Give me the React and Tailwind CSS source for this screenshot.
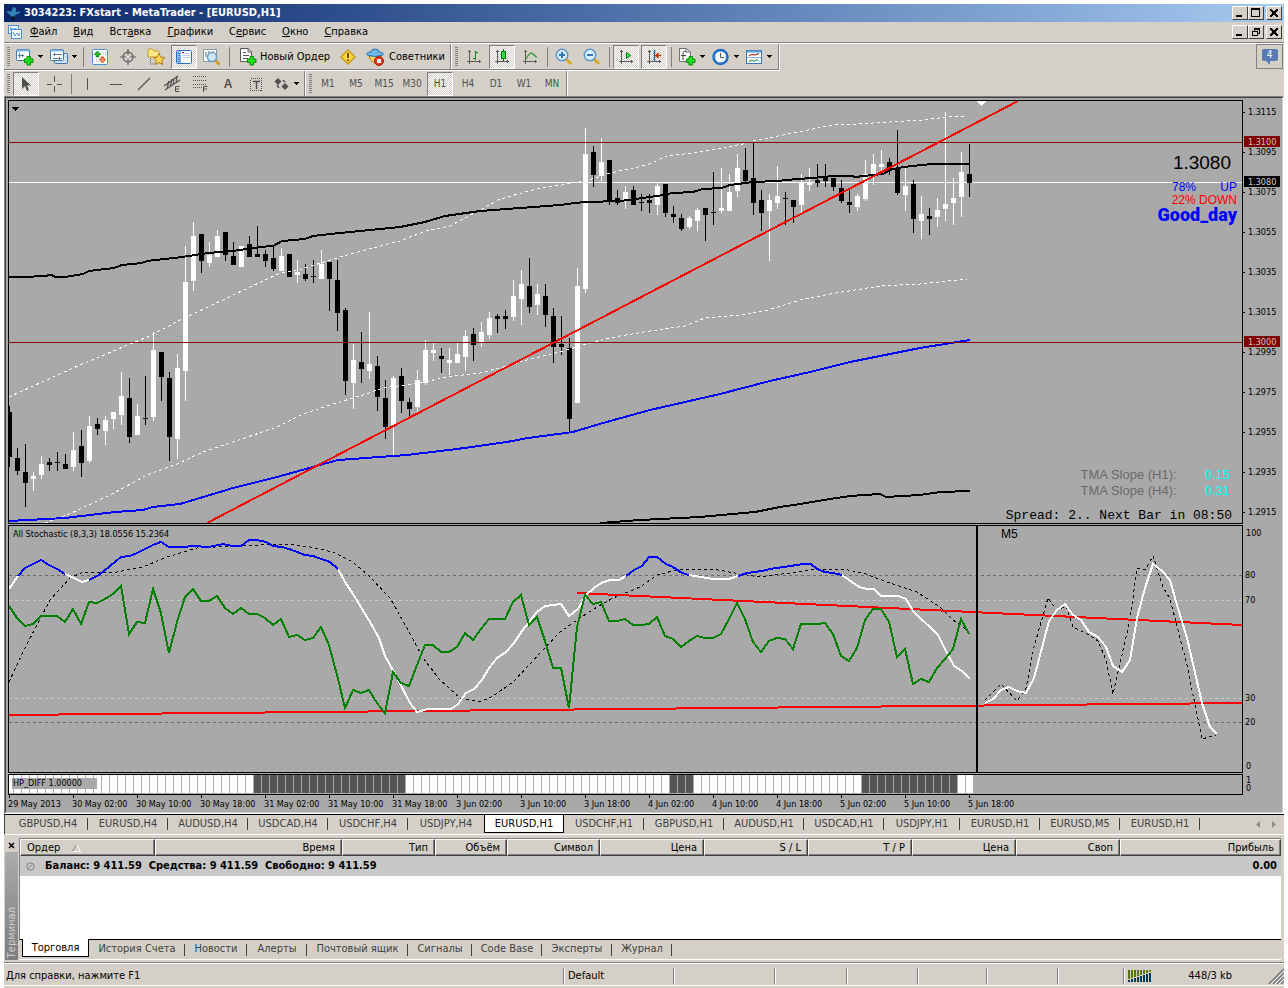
import React, { useState } from "react";

// [high, body top, body bottom, low, filled]
const candles = [
  [406, 412, 457, 467, 1], [448, 458, 471, 475, 1], [444, 472, 483, 507, 1], [472, 476, 479, 491, 0],
  [456, 464, 475, 479, 0], [458, 462, 465, 471, 1], [452, 462, 463, 471, 1], [454, 464, 469, 469, 1],
  [432, 450, 467, 471, 0], [430, 446, 463, 477, 1], [416, 426, 461, 463, 0], [418, 424, 429, 435, 1],
  [416, 420, 431, 445, 0], [412, 412, 419, 429, 0], [372, 396, 415, 425, 0], [378, 398, 437, 443, 1],
  [404, 416, 435, 435, 0], [376, 418, 419, 425, 1], [332, 350, 417, 421, 0], [352, 352, 377, 401, 1],
  [372, 378, 437, 461, 1], [354, 368, 439, 459, 0], [246, 282, 371, 401, 0], [222, 236, 281, 291, 0],
  [234, 234, 261, 273, 1], [242, 255, 263, 267, 0], [230, 236, 257, 257, 0], [232, 232, 255, 261, 1],
  [242, 256, 265, 265, 1], [246, 246, 267, 267, 0], [236, 244, 257, 257, 1], [226, 254, 257, 257, 1],
  [250, 254, 261, 267, 1], [246, 258, 269, 271, 1], [248, 256, 271, 271, 0], [254, 254, 277, 277, 1],
  [260, 272, 275, 283, 0], [264, 274, 279, 281, 1], [260, 276, 277, 283, 1], [250, 264, 279, 279, 0],
  [262, 262, 279, 311, 1], [260, 280, 313, 331, 1], [308, 310, 381, 395, 1], [344, 360, 383, 409, 0],
  [332, 362, 369, 383, 1], [312, 364, 371, 379, 0], [356, 366, 397, 411, 1], [380, 398, 427, 439, 1],
  [376, 378, 425, 455, 0], [368, 376, 401, 413, 1], [398, 402, 409, 417, 1], [370, 380, 407, 413, 0],
  [340, 350, 383, 385, 0], [343, 350, 353, 361, 0], [348, 356, 359, 373, 1], [348, 360, 363, 375, 0],
  [343, 354, 363, 363, 0], [330, 336, 357, 371, 0], [328, 334, 345, 361, 1], [322, 332, 342, 347, 0],
  [312, 318, 335, 339, 0], [314, 316, 319, 333, 1], [310, 316, 319, 329, 1], [280, 296, 317, 321, 0],
  [270, 284, 299, 325, 0], [258, 286, 307, 313, 1], [284, 294, 305, 315, 0], [284, 296, 315, 327, 1],
  [308, 316, 347, 363, 1], [316, 344, 347, 355, 1], [338, 348, 419, 432, 1], [268, 286, 403, 403, 0],
  [128, 154, 289, 293, 0], [146, 152, 175, 187, 1], [138, 162, 176, 181, 0], [160, 160, 202, 205, 1],
  [190, 198, 203, 205, 1], [186, 192, 200, 209, 0], [186, 190, 205, 205, 1], [194, 202, 203, 211, 1],
  [194, 200, 203, 213, 1], [183, 186, 205, 215, 0], [184, 184, 213, 217, 1], [206, 214, 217, 223, 1],
  [214, 218, 229, 231, 1], [216, 218, 227, 229, 0], [208, 210, 221, 231, 0], [208, 208, 215, 241, 1],
  [172, 212, 213, 225, 1], [168, 208, 211, 213, 0], [174, 192, 211, 211, 0], [154, 168, 191, 197, 0],
  [148, 170, 181, 183, 1], [143, 178, 203, 215, 1], [190, 200, 213, 231, 1], [194, 200, 211, 261, 0],
  [166, 196, 203, 209, 0], [192, 198, 199, 225, 1], [200, 200, 207, 223, 1], [174, 182, 205, 213, 0],
  [168, 182, 185, 191, 0], [164, 180, 183, 187, 1], [164, 178, 181, 187, 1], [178, 178, 187, 191, 1],
  [180, 188, 201, 203, 1], [190, 202, 205, 213, 1], [194, 196, 207, 211, 0], [160, 174, 199, 201, 0],
  [154, 164, 175, 185, 0], [150, 164, 167, 171, 0], [158, 162, 170, 175, 1], [130, 168, 193, 195, 1],
  [168, 186, 195, 211, 0], [180, 184, 219, 233, 1], [196, 214, 221, 239, 0], [208, 216, 219, 235, 1],
  [198, 210, 217, 227, 0], [112, 204, 209, 221, 0], [178, 198, 203, 225, 0], [152, 172, 197, 217, 0],
  [144, 174, 183, 197, 1],
];

const maMiddle =
  "9,277 33,277 35,276 43,276 52,275 55,277 65,277 83,274 89,271 114,268 122,265 142,263 147,261 182,257 208,253 233,251 260,247 273,246 282,241 305,239 313,236 330,234 370,230 400,227 425,222 445,216 480,211 520,208 560,205 575,203 586,202 620,201 635,199 657,196 673,193 693,192 703,189 722,188 730,185 753,182 777,181 797,179 813,178 833,176 852,176 855,177 873,175 883,174 890,170 903,167 932,164 970,164";
const maLow =
  "600,523 640,520 700,517 755,512 780,507 800,504 830,499 850,496 880,494 886,497 920,495 940,492 970,491";
const maBlue =
  "9,521 65,518 115,512 143,510 153,507 180,504 200,498 233,488 277,477 320,465 338,460 407,455 457,449 507,442 528,438 573,432 603,423 650,410 720,394 770,381 810,372 850,362 890,354 920,348 945,344 970,340";
const bandUpper =
  "9,397 33,386 80,365 130,344 150,336 180,320 208,307 250,287 280,273 302,269 330,260 350,254 400,241 426,231 450,226 480,210 500,199 540,188 562,185 572,183 586,181 610,173 647,165 667,156 693,153 743,144 753,141 793,133 833,125 857,124 923,120 947,117 967,116";
const bandLower =
  "45,523 67,515 110,495 147,475 177,464 203,452 233,442 277,427 303,414 330,405 363,395 383,388 420,383 447,377 480,373 507,366 527,360 563,351 583,345 593,342 620,336 650,331 685,326 705,318 740,315 765,311 800,300 830,294 880,286 920,284 967,279";

const stochWhite = [
  "9,589 18,576",
  "65,574 74,578 82,582 89,580",
  "338,569 345,582 353,594 370,622 379,638 385,656 394,672 410,703 417,712 428,709 451,709 458,704 466,693 474,689 482,680 489,668 497,658 506,652 514,643 522,631 529,622 537,612 545,606 553,605 561,604 569,616 578,609 586,595 594,588 601,583 610,580 619,580 626,576",
  "689,575 701,577 713,579 729,579 738,576",
  "842,575 859,587 867,589 874,589 881,596 898,596 906,599 913,611 938,635 947,653 954,666 962,671 970,679",
];
const stochBlue = [
  "18,576 25,568 41,560 49,565 57,569 65,574",
  "89,580 99,575 121,557 130,556 137,553 153,545 161,542 169,547 183,547 193,546 209,547 223,544 232,546 241,546 249,540 257,540 266,542 273,546 282,547 289,549 305,555 313,556 330,562 338,569",
  "626,576 634,570 642,566 649,557 657,557 666,564 673,567 682,573 689,575",
  "738,576 747,573 762,571 770,569 797,565 803,564 811,564 817,569 825,572 833,573 842,575",
];
const stochSignal =
  "9,682 25,648 50,600 70,578 83,572 117,572 143,567 167,557 197,548 233,546 287,544 310,547 333,552 353,562 370,577 390,598 407,628 423,658 440,680 460,698 480,702 493,696 513,682 543,650 560,632 580,618 597,607 613,598 640,587 657,575 680,569 713,569 740,574 760,577 797,572 817,569 843,569 863,573 887,582 917,592 940,607 953,620 969,632";
const stochFast = [
  606, 618, 626, 624, 616, 616, 616, 622, 609, 624, 602, 603, 599, 594, 586, 634, 622, 623, 589, 613, 653,
  622, 597, 589, 601, 601, 596, 608, 614, 608, 614, 614, 618, 625, 619, 637, 635, 640, 638, 627, 645, 675,
  708, 690, 693, 690, 703, 713, 672, 683, 686, 665, 645, 645, 652, 652, 647, 633, 640, 629, 619, 619, 619,
  602, 595, 625, 617, 641, 668, 668, 708, 627, 595, 604, 602, 621, 621, 619, 625, 625, 624, 617, 636, 639,
  647, 641, 636, 638, 638, 634, 619, 603, 619, 642, 652, 641, 638, 639, 649, 624, 624, 624, 623, 634, 656,
  661, 648, 620, 609, 609, 622, 657, 649, 684, 679, 682, 668, 659, 649, 619, 634,
];
const m5Main =
  "985,703 993,699 1001,690 1009,687 1017,691 1026,693 1034,678 1049,621 1057,610 1065,604 1073,615 1081,620 1089,632 1098,637 1106,647 1113,666 1122,672 1130,660 1137,618 1145,588 1153,564 1162,571 1170,580 1177,605 1187,638 1202,703 1210,727 1217,734";
const m5Signal =
  "985,700 1001,684 1017,701 1026,688 1034,647 1048,598 1057,610 1066,606 1073,627 1089,635 1098,641 1106,660 1113,694 1130,620 1137,568 1145,570 1153,556 1163,587 1170,599 1187,665 1202,739 1216,735";

const prices = ["1.3115", "1.3095", "1.3075", "1.3055", "1.3035", "1.3015", "1.2995", "1.2975", "1.2955", "1.2935", "1.2915"];
const times = [
  "29 May 2013", "30 May 02:00", "30 May 10:00", "30 May 18:00", "31 May 02:00", "31 May 10:00", "31 May 18:00", "3 Jun 02:00",
  "3 Jun 10:00", "3 Jun 18:00", "4 Jun 02:00", "4 Jun 10:00", "4 Jun 18:00", "5 Jun 02:00", "5 Jun 10:00", "5 Jun 18:00",
];

const menu = [
  ["", "Ф", "айл"], ["", "В", "ид"], ["Вст", "а", "вка"], ["", "Г", "рафики"],
  ["С", "е", "рвис"], ["", "О", "кно"], ["", "С", "правка"],
];

const chartTabs = [
  "GBPUSD,H4", "EURUSD,H4", "AUDUSD,H4", "USDCAD,H4", "USDCHF,H4", "USDJPY,H4", "EURUSD,H1", "USDCHF,H1",
  "GBPUSD,H1", "AUDUSD,H1", "USDCAD,H1", "USDJPY,H1", "EURUSD,H1", "EURUSD,M5", "EURUSD,H1",
];

const terminalTabs = [
  ["Торговля", "w-[67px]"], ["История Счета", "w-24"], ["Новости", "w-[62px]"], ["Алерты", "w-[60px]"],
  ["Почтовый ящик", "w-[101px]"], ["Сигналы", "w-16"], ["Code Base", "w-[70px]"], ["Эксперты", "w-[70px]"], ["Журнал", "w-[60px]"],
];

const columns = [
  ["Время", "w-[187px]"], ["Тип", "w-[93px]"], ["Объём", "w-[72px]"], ["Символ", "w-[93px]"], ["Цена", "w-[104px]"],
  ["S / L", "w-[104px]"], ["T / P", "w-[104px]"], ["Цена", "w-[104px]"], ["Своп", "w-[104px]"], ["Прибыль", ""],
];

/* ---------- toolbar parts ---------- */

function Grip() {
  return (
    <div className="w-2 shrink-0 flex items-center justify-center">
      <div className="w-[3px] h-5 bg-[repeating-linear-gradient(#808080_0_1px,#d4d0c8_1px_2px)]" />
    </div>
  );
}

function Sep() {
  return (
    <div className="w-1.5 shrink-0 flex items-center justify-center">
      <div className="w-px h-5 bg-[#808080]" />
    </div>
  );
}

function ToolButton({ label, pressed, drop, children }) {
  return (
    <button
      type="button"
      aria-label={label}
      className={
        "shrink-0 h-6 flex items-center " +
        (drop ? "w-[34px] pl-1 gap-1 " : "w-[26px] mx-px justify-center ") +
        (pressed
          ? "border border-t-[#808080] border-l-[#808080] border-r-white border-b-white bg-[repeating-conic-gradient(#fff_0_25%,#d4d0c8_0_50%)] bg-[length:2px_2px]"
          : "")
      }
    >
      {children}
      {drop && (
        <svg width="5" height="3" className="shrink-0" shapeRendering="crispEdges">
          <path d="M0 0H5V1H4V2H3V3H2V2H1V1H0Z" />
        </svg>
      )}
    </button>
  );
}

function Icon({ w = 18, h = 18, children }) {
  return (
    <svg width={w} height={h} viewBox={`0 0 ${w} ${h}`} fill="none" className="shrink-0" aria-hidden="true">
      {children}
    </svg>
  );
}

const Plus = ({ x, y }) => (
  <path
    transform={`translate(${x} ${y})`}
    d="M3 .5H6.500V3H9V6.500H6.500V9H3V6.500H.5V3H3Z"
    fill="#1fe01f"
    stroke="#0a8a0a"
  />
);

const Axes = () => (
  <g stroke="#5a5a5a" shapeRendering="crispEdges">
    <path d="M3.500 2V16M1 13.500H15" />
    <path d="M2 3.500H5M13.500 12V15" />
  </g>
);

function NewChartIcon() {
  return (
    <Icon>
      <rect x=".5" y="1.500" width="13" height="11" rx="1" fill="#fff" stroke="#3a78b4" />
      <path d="M1 2.500H13" stroke="#7db1e0" strokeWidth="2" />
      <path d="M3.500 5V10M2 7.500H8M6.500 6V9" stroke="#5a7a9a" />
      <Plus x={8} y={8} />
    </Icon>
  );
}

function ProfilesIcon() {
  return (
    <Icon>
      <rect x="4.500" y="5.500" width="13" height="10" rx="1" fill="#cfe3f7" stroke="#3a78b4" />
      <rect x=".5" y="1.500" width="13" height="11" rx="1" fill="#fff" stroke="#3a78b4" />
      <path d="M1 2.500H13" stroke="#7db1e0" strokeWidth="2" />
      <path d="M3 6.500H12M3 10.500H12M4.500 5V8M9.500 9V12" stroke="#5a7a9a" />
    </Icon>
  );
}

function MarketIcon() {
  return (
    <Icon w={16} h={16}>
      <rect x=".5" y=".5" width="15" height="15" rx="1" fill="#fff" stroke="#4a90d0" />
      <path d="M9 3.500H14M9 5.500H14M2 10.500H7M2 12.500H7" stroke="#b8c8d8" strokeDasharray="1 1" />
      <path d="M5.500 2L9 5.500H7V8H4V5.500H2Z" fill="#28b428" stroke="#0a7a0a" strokeWidth=".6" />
      <path d="M10.500 14L7.500 10.500H9V8H12V10.500H13.500Z" fill="#ff9060" stroke="#c8320a" strokeWidth=".8" />
    </Icon>
  );
}

function TargetIcon() {
  return (
    <Icon w={16} h={16}>
      <circle cx="8" cy="8" r="5" stroke="#707070" strokeWidth="1.500" />
      <path d="M8 0V6M8 10V16M0 8H6M10 8H16" stroke="#606060" strokeWidth="1.200" />
    </Icon>
  );
}

function FolderStarIcon() {
  return (
    <Icon>
      <path d="M1 2Q1 1 2 1H5L7 3H11Q12 3 12 4V9H1Z" fill="#ffe98a" stroke="#c8961e" />
      <path d="M3.500 10V16H8" stroke="#606060" strokeDasharray="1 1" />
      <path
        d="M12 5.500L13.800 9.200L17.600 9.800L14.800 12.400L15.600 16.500L12 14.500L8.400 16.500L9.200 12.400L6.400 9.800L10.200 9.200Z"
        fill="#ffd85a"
        stroke="#b8780a"
      />
    </Icon>
  );
}

function NavigatorIcon() {
  return (
    <Icon w={16} h={14}>
      <rect x=".5" y=".5" width="15" height="13" rx="1" fill="#fff" stroke="#2a70c0" />
      <path d="M1 1H5V13H1Z" fill="#8cc0f4" />
      <path d="M7 3.500H14M7 5.500H14M7 7.500H14" stroke="#c4d0ec" />
      <path d="M6 2.500H8" stroke="#e00" />
      <path d="M3 3V12" stroke="#003c96" strokeDasharray="1 1" />
    </Icon>
  );
}

function TesterIcon() {
  return (
    <Icon>
      <rect x=".5" y="1.500" width="13" height="12" fill="#fff" stroke="#8a9aa8" />
      <path d="M3 4V9M6 3V7M10 3V6" stroke="#5a6a78" />
      <path d="M12.500 12.500L16.500 16.500" stroke="#c89a28" strokeWidth="2.500" />
      <circle cx="9" cy="9" r="4.500" fill="#cfe6f8" stroke="#6aa0cc" strokeWidth="1.500" />
    </Icon>
  );
}

function OrderIcon() {
  return (
    <Icon w={17} h={18}>
      <path d="M.5 .5H8L11.500 4V13.500H.5Z" fill="#fff" stroke="#555" />
      <path d="M8 .5V4H11.500" stroke="#555" />
      <path d="M3 4.500H6M3 7.500H9M3 10.500H8" stroke="#555" />
      <Plus x={7} y={8} />
    </Icon>
  );
}

function AlertIcon() {
  return (
    <Icon w={16} h={16}>
      <path d="M8 1L15 8L8 15L1 8Z" fill="#fcd83c" stroke="#c89a1a" strokeLinejoin="round" strokeWidth="1.500" />
      <path d="M8 4V9M8 10.500V12" stroke="#604000" strokeWidth="1.800" />
    </Icon>
  );
}

function ExpertsIcon() {
  return (
    <Icon w={19}>
      <path d="M3 8Q5 15 10 15Q14 14 15 8Z" fill="#f8d060" stroke="#b8860a" />
      <path d="M1 7Q0 4 5 4Q5 1 9 1Q13 1 13 4Q18 4 17 7Q9 10 1 7Z" fill="#6cb8e8" stroke="#2a78b0" />
      <circle cx="13" cy="13" r="4.500" fill="#e23a1e" stroke="#a01808" />
      <path d="M11 11H15V15H11Z" fill="#fff" />
    </Icon>
  );
}

function ZoomIcon({ plus }) {
  return (
    <Icon>
      <path d="M11 11L16 16" stroke="#d8a820" strokeWidth="3" />
      <circle cx="7" cy="7" r="5.700" fill="#d8efff" stroke="#5a96ce" strokeWidth="1.500" />
      <path d={plus ? "M4 7H10M7 4V10" : "M4 7H10"} stroke="#3474b0" strokeWidth="2" />
    </Icon>
  );
}

function AxisIcon({ kind }) {
  return (
    <Icon w={16} h={17}>
      <Axes />
      {kind === "bars" && <path d="M9.500 3V12M7 10.500H9M10 4.500H12" stroke="#0a8a0a" shapeRendering="crispEdges" />}
      {kind === "candles" && (
        <g shapeRendering="crispEdges">
          <path d="M9.500 1V13" stroke="#067a06" />
          <rect x="7.500" y="3.500" width="4" height="7" fill="#2fdc4a" stroke="#067a06" />
        </g>
      )}
      {kind === "line" && <path d="M4 11Q8 3 11 6T15 9" stroke="#2a9a2a" strokeWidth="1.200" />}
      {kind === "scroll" && <path d="M8.500 4.500V10.500L12.500 7.500Z" fill="#3fe05a" stroke="#067a06" />}
      {kind === "shift" && (
        <>
          <path d="M8.500 2V13" stroke="#2064a8" strokeWidth="1.500" />
          <path d="M15 7.500H10M12.500 5L10 7.500L12.500 10" stroke="#c03000" strokeWidth="1.500" />
        </>
      )}
    </Icon>
  );
}

function IndicatorsIcon() {
  return (
    <Icon>
      <path d="M1.500 .5H8L12.500 4V13.500H1.500Z" fill="#fff" stroke="#707070" />
      <path d="M8 .5V4H12" stroke="#707070" />
      <path d="M8 3.500Q5 2.500 5 6V12M3 7.500H8" stroke="#444" />
      <Plus x={8} y={8} />
    </Icon>
  );
}

function ClockIcon() {
  return (
    <Icon>
      <circle cx="8.500" cy="9" r="7" fill="#f4faff" stroke="#1c6cc8" strokeWidth="2.400" />
      <path d="M8.500 5V9.500H12" stroke="#555" />
      <path d="M8.500 3V4M8.500 14V15M3 9H4M13 9H14" stroke="#88a" />
    </Icon>
  );
}

function TemplateIcon() {
  return (
    <Icon w={17} h={16}>
      <rect x=".5" y="1.500" width="15" height="13" fill="#fff" stroke="#3a78b4" />
      <path d="M1 2.500H15" stroke="#5a9ad8" strokeWidth="2" />
      <path d="M1 8.500H15" stroke="#8ab8e4" />
      <path d="M3 6.500L6 5.500L9 6L13 4.500" stroke="#a02010" strokeWidth="1.200" />
      <path d="M3 12.500L6 11L8 12.500L11 10.500L13 12.500" stroke="#0a8a2a" />
    </Icon>
  );
}

/* ---------- window buttons ---------- */

function WindowButton({ label, children }) {
  return (
    <button
      type="button"
      aria-label={label}
      className="w-4 h-3.5 bg-[#d4d0c8] border border-t-white border-l-white border-r-[#404040] border-b-[#404040] flex items-center justify-center"
    >
      <svg width="10" height="10" viewBox="0 0 10 10" shapeRendering="crispEdges" fill="none" stroke="#000">
        {children}
      </svg>
    </button>
  );
}

function WindowButtons({ restore }) {
  return (
    <div className="flex pr-0.5">
      <WindowButton label="Свернуть">
        <path d="M1 8H7" strokeWidth="2" />
      </WindowButton>
      <WindowButton label="Развернуть">
        {restore ? (
          <path d="M3 1H9M3 2.500H9M3.500 1V4M8.500 1V6.500H7M1 4.500H7M1.500 4V9M6.500 4V9M1 8.500H7" />
        ) : (
          <path d="M0 .5H9M0 1.500H9M.5 1V9M8.500 1V9M0 8.500H9" />
        )}
      </WindowButton>
      <div className="w-0.5" />
      <WindowButton label="Закрыть">
        <path d="M1 1.500L8 8.500M8 1.500L1 8.500M2 1.500L9 8.500M9 1.500L2 8.500" />
      </WindowButton>
    </div>
  );
}

/* ---------- chart ---------- */

function Line({ points, color, dashed }) {
  return (
    <polyline
      points={points}
      fill="none"
      stroke={color}
      strokeWidth={dashed ? 1 : 2}
      strokeDasharray={dashed ? "3 3" : undefined}
    />
  );
}

function PricePane() {
  return (
    <div className="relative flex-1 min-w-0 border border-black">
      <svg className="block w-full h-[422px]" shapeRendering="crispEdges">
        <rect y="81" width="100%" height="1" fill="#fff" />
        <g transform="translate(-9 -101)">
          {candles.map(([hi, top, bottom, lo, filled], i) => (
            <g key={i} fill={filled ? "#000" : "#fff"}>
              <rect x={9 + i * 8} y={hi} width="1" height={lo - hi} />
              <rect x={7 + i * 8} y={top} width="5" height={bottom - top} />
            </g>
          ))}
          <Line points={bandUpper} color="#fff" dashed />
          <Line points={bandLower} color="#fff" dashed />
          <Line points={maMiddle} color="#000" />
          <Line points={maLow} color="#000" />
          <Line points={maBlue} color="#00f" />
          <path d="M12 107H19L15.500 111Z" fill="#000" />
          <path d="M977 101H986L981.500 106Z" fill="#fff" />
        </g>
        <rect y="41" width="100%" height="1" fill="#800000" />
        <rect y="241" width="100%" height="1" fill="#800000" />
        <path d="M198 422L1009 0" stroke="#f00" strokeWidth="2" />
      </svg>
      <div className="absolute top-[52px] right-[5px] flex flex-col items-end font-['Liberation_Sans',Arial,sans-serif] text-xs">
        <div className="text-[19px] leading-5 pr-1.5 mb-2">1.3080</div>
        <div className="w-[65px] flex justify-between leading-[13px] text-[#00f]">
          <span>78%</span>
          <span>UP</span>
        </div>
        <div className="leading-3 text-[#f00]">22% DOWN</div>
        <div className="font-[Roboto,sans-serif] font-black text-[18px] leading-[18px] text-[#00f]">Good_day</div>
      </div>
      <table className="absolute top-[366px] right-3 font-['Liberation_Sans',Arial,sans-serif] text-[13px] leading-4 text-[#696969]">
        <tbody>
          <tr>
            <th className="font-normal pr-7">TMA Slope (H1):</th>
            <td className="text-[#0ff]">0.15</td>
          </tr>
          <tr>
            <th className="font-normal pr-7">TMA Slope (H4):</th>
            <td className="text-[#0ff]">0.31</td>
          </tr>
        </tbody>
      </table>
      <div className="absolute bottom-0 right-2.5 font-['Liberation_Mono',monospace] text-[13px] leading-[14px]">
        Spread: 2.. Next Bar in 08:50
      </div>
    </div>
  );
}

function PriceTag({ y, children, fill, color }) {
  return (
    <g>
      <rect x="1" y={y - 5} width="36" height="11" fill={fill} />
      <text x="5" y={y + 4} fill={color}>
        {children}
      </text>
    </g>
  );
}

function StochPane() {
  return (
    <div className="relative flex-1 min-w-0 border border-black">
      <svg className="block w-full h-[246px]" shapeRendering="crispEdges">
        <g strokeDasharray="3 3">
          <line x2="100%" y1="49.500" y2="49.500" stroke="#696969" />
          <line x2="100%" y1="74.500" y2="74.500" stroke="#c8c8c8" />
          <line x2="100%" y1="172.500" y2="172.500" stroke="#c8c8c8" />
          <line x2="100%" y1="196.500" y2="196.500" stroke="#696969" />
        </g>
        <g transform="translate(-9 -526)">
          <Line points={stochSignal} color="#000" dashed />
          <Line points={m5Signal} color="#000" dashed />
          <Line points="9,715 1242,703" color="#f00" />
          <Line points="577,593 1242,625" color="#f00" />
          <rect x="976" y="526" width="2" height="246" fill="#000" />
          {stochWhite.map((p) => (
            <Line key={p} points={p} color="#fff" />
          ))}
          {stochBlue.map((p) => (
            <Line key={p} points={p} color="#00f" />
          ))}
          <Line points={stochFast.map((y, i) => `${9 + i * 8},${y}`).join(" ")} color="#008000" />
          <Line points={m5Main} color="#fff" />
        </g>
      </svg>
      <div className="absolute top-0.5 left-1 text-[9px] leading-3">All Stochastic (8,3,3) 18.0556 15.2364</div>
      <div className="absolute top-0 left-[992px] font-['Liberation_Sans',Arial,sans-serif] text-xs leading-4">M5</div>
    </div>
  );
}

function DiffPane() {
  const down = (i) => (i >= 31 && i <= 49) || (i >= 83 && i <= 85) || (i >= 107 && i <= 118);
  return (
    <div className="relative flex-1 min-w-0 border border-black">
      <svg className="block w-full h-[19px]" shapeRendering="crispEdges">
        {candles.map((_, i) => (
          <rect key={i} x={i * 8 - 3} y="0" width="7" height="18" fill={down(i) ? "#555" : "#fff"} />
        ))}
      </svg>
      <div className="absolute top-[3px] left-[3px] w-[85px] pl-px bg-[#a9a9a9] text-[9px] leading-[11px]">HP_DIFF 1.00000</div>
    </div>
  );
}

function Chart() {
  return (
    <div className="border border-t-[#808080] border-l-[#808080] border-r-white border-b-white">
      <div className="border border-t-[#404040] border-l-[#404040] border-r-[#d4d0c8] border-b-[#d4d0c8] bg-[#a9a9a9] pt-0.5 pl-0.5">
        <div className="flex mb-px">
          <PricePane />
          <svg className="w-[39px] h-[424px] text-[9px]" shapeRendering="crispEdges">
            {prices.map((p, i) => (
              <g key={p}>
                <rect y={12 + i * 40} width="2" height="1" />
                <text x="5" y={15 + i * 40}>
                  {p}
                </text>
              </g>
            ))}
            <PriceTag y={41} fill="#800000" color="#d0c0c0">1.3100</PriceTag>
            <PriceTag y={81} fill="#000" color="#d0d0d0">1.3080</PriceTag>
            <PriceTag y={241} fill="#800000" color="#d0c0c0">1.3000</PriceTag>
          </svg>
        </div>
        <div className="flex mb-px">
          <StochPane />
          <svg className="w-[39px] h-[248px] text-[9px]">
            <text x="3" y="11">100</text>
            <text x="2" y="53">80</text>
            <text x="2" y="78">70</text>
            <text x="2" y="176">30</text>
            <text x="2" y="200">20</text>
            <text x="3" y="244">0</text>
          </svg>
        </div>
        <div className="flex">
          <DiffPane />
          <svg className="w-[39px] h-[21px] text-[9px]">
            <text x="3" y="9">1</text>
            <text x="3" y="17">0</text>
          </svg>
        </div>
        <svg className="block w-full h-[17px] text-[9px]" shapeRendering="crispEdges">
          {times.map((t, i) => (
            <g key={t}>
              <rect x={1 + i * 64} width="1" height="3" />
              <text x={i * 64} y="12">
                {t}
              </text>
            </g>
          ))}
        </svg>
      </div>
    </div>
  );
}

/* ---------- terminal ---------- */

const headCell =
  "h-[17px] p-0 px-1.5 font-normal border border-t-white border-l-white border-r-[#404040] border-b-[#404040] shadow-[inset_-1px_-1px_0_#808080]";

function Terminal() {
  const [tab, setTab] = useState(0);
  return (
    <div className="flex-1 flex pt-[3px] pr-[3px] pb-0.5">
      <div className="w-[15px] shrink-0 flex flex-col items-center">
        <button type="button" aria-label="Закрыть" className="h-3.5">
          <svg width="7" height="7" viewBox="0 0 7 7" stroke="#000" strokeWidth="1.600">
            <path d="M1 1L6 6M6 1L1 6" />
          </svg>
        </button>
        <div className="flex-1 w-[13px] bg-linear-to-b from-[#acacac] to-[#7c7c7c] flex items-end justify-center text-[#d0d0d0] leading-[13px]">
          <span className="[writing-mode:vertical-rl] rotate-180 pt-0.5">Терминал</span>
        </div>
      </div>
      <div className="flex-1 min-w-0 flex flex-col">
        <div className="flex-1 border-t border-l border-t-[#808080] border-l-[#808080] border-b border-b-black bg-white">
          <table className="w-full table-fixed border-separate border-spacing-0">
            <thead>
              <tr className="bg-[#d4d0c8] leading-[15px]">
                <th className={headCell + " w-[135px] text-left"}>
                  <span className="flex items-center gap-3">
                    Ордер
                    <svg width="9" height="8" viewBox="0 0 9 8" fill="none">
                      <path d="M4.500 .5L.5 7" stroke="#808080" />
                      <path d="M.5 7.500H8.500L4.500 .5" stroke="#fff" />
                    </svg>
                  </span>
                </th>
                {columns.map(([name, width], i) => (
                  <th key={i} className={headCell + " text-right " + width}>
                    {name}
                  </th>
                ))}
              </tr>
            </thead>
            <tbody>
              <tr className="bg-[#c8c8c8] h-5 font-bold leading-5">
                <td colSpan={10} className="p-0">
                  <span className="flex items-center pl-1.5 gap-2.5 whitespace-pre">
                    <svg width="9" height="9" viewBox="0 0 9 9" fill="none" stroke="#808080">
                      <circle cx="4.500" cy="4.500" r="3.700" />
                      <path d="M2.500 6.500L6.500 2.500" />
                    </svg>
                    {"Баланс: 9 411.59  Средства: 9 411.59  Свободно: 9 411.59"}
                  </span>
                </td>
                <td className="p-0 pr-1 text-right">0.00</td>
              </tr>
            </tbody>
          </table>
        </div>
        <div className="flex pl-[3px] h-5 border-b border-white text-[#404040]">
          {terminalTabs.map(([name, width], i) => (
            <button
              key={name}
              type="button"
              onClick={() => setTab(i)}
              className={
                "relative flex items-center justify-center whitespace-nowrap " +
                width +
                (tab === i
                  ? " -mt-px h-[18px] bg-white text-black border border-t-0 border-black"
                  : " h-[18px] after:absolute after:right-0 after:top-1 after:h-3 after:w-px after:bg-[#404040]")
              }
            >
              {name}
            </button>
          ))}
        </div>
      </div>
    </div>
  );
}

const statusCell = "h-4 border-l border-[#808080] shadow-[inset_1px_0_0_#fff] ";

function StatusBar() {
  return (
    <div className="h-[26px] border-t border-[#808080]">
      <div className="h-[23px] border-t border-b border-white flex items-center pt-0.5">
        <span className="flex-1 pl-0.5">Для справки, нажмите F1</span>
        <span className={statusCell + "w-[110px] pl-1"}>Default</span>
        <span className={statusCell + "w-[101px]"} />
        <span className={statusCell + "w-[72px]"} />
        <span className={statusCell + "w-[71px]"} />
        <span className={statusCell + "w-[69px]"} />
        <span className={statusCell + "w-[71px]"} />
        <span className={statusCell + "w-[66px]"} />
        <span className={statusCell + "w-[161px] pl-1 flex items-center"}>
          <svg width="24" height="12" shapeRendering="crispEdges">
            {[0, 1, 2, 3, 4, 5, 6, 7].map((i) => (
              <g key={i}>
                <rect x={i * 3} width="2" height={9 - i} fill="#5a7800" />
                <rect x={i * 3} y={10 - i} width="2" height={2 + i} fill="#003c5a" />
              </g>
            ))}
          </svg>
          <span className="ml-auto mr-9">448/3 kb</span>
          <svg width="16" height="16" className="self-end shrink-0">
            <path d="M1 16L16 1M5 16L16 5M9 16L16 9M13 16L16 13" stroke="#808080" strokeWidth="1.800" />
            <path d="M3 16L16 3M7 16L16 7M11 16L16 11" stroke="#fff" />
          </svg>
        </span>
      </div>
    </div>
  );
}

const frames = ["M1", "M5", "M15", "M30", "H1", "H4", "D1", "W1", "MN"];

export default function App() {
  const [activeTab, setActiveTab] = useState(6);
  const [frame, setFrame] = useState("H1");

  return (
    <div className="min-h-screen flex flex-col bg-white pt-1 px-1 text-[11px] leading-4 text-black font-['DejaVu_Sans_Condensed','Liberation_Sans',sans-serif]">
      {/* Title */}
      <div className="h-[18px] flex items-center justify-between bg-linear-to-r from-[#0a246a] to-[#a6caf0]">
        <div className="flex items-center gap-[3px] pl-0.5 text-white font-bold">
          <svg width="15" height="14" viewBox="0 0 15 14">
            <path d="M0 6L3 5L5 6L7 1L10 2L10 6L15 5L12 8L9 9L8 12L5 10L3 8Z" fill="#2f86b0" />
            <path d="M6 10L9 11L8 14H6Z" fill="#111" />
          </svg>
          3034223: FXstart - MetaTrader - [EURUSD,H1]
        </div>
        <WindowButtons />
      </div>

      <div className="flex-1 flex flex-col bg-[#d4d0c8]">
        {/* Menu */}
        <div className="h-[21px] flex items-center justify-between border-b border-[#808080]">
          <nav className="flex items-center gap-4 pl-1">
            <svg width="14" height="14" viewBox="0 0 14 14" fill="#fff" stroke="#4a90d8" className="-mr-2">
              <rect x=".5" y=".5" width="10" height="8" />
              <path d="M2 4H9M3 2V6M7 3V7" />
              <rect x="3.500" y="4.500" width="10" height="9" />
              <path d="M5 7L7 11L9 8L11 11L12 8" fill="none" />
            </svg>
            {menu.map(([a, b, c]) => (
              <button type="button" key={a + b + c}>
                {a}
                <u>{b}</u>
                {c}
              </button>
            ))}
          </nav>
          <WindowButtons restore />
        </div>
        <div className="h-px bg-white" />

        {/* Toolbars */}
        <div className="flex justify-between h-[52px]">
          <div className="flex flex-col items-start gap-px">
            <div className="flex items-center h-[26px] pr-0.5 border-r border-b border-[#808080] shadow-[1px_1px_0_#fff]">
              <Grip />
              <ToolButton label="Новый график" drop><NewChartIcon /></ToolButton>
              <ToolButton label="Профили" drop><ProfilesIcon /></ToolButton>
              <Sep />
              <ToolButton label="Обзор рынка"><MarketIcon /></ToolButton>
              <ToolButton label="Окно данных"><TargetIcon /></ToolButton>
              <ToolButton label="Навигатор"><FolderStarIcon /></ToolButton>
              <ToolButton label="Терминал" pressed><NavigatorIcon /></ToolButton>
              <ToolButton label="Тестер"><TesterIcon /></ToolButton>
              <Sep />
              <button type="button" className="flex items-center gap-[3px] pl-2 w-[102px] h-6 whitespace-nowrap">
                <OrderIcon />
                Новый Ордер
              </button>
              <ToolButton label="Редактор"><AlertIcon /></ToolButton>
              <button type="button" className="flex items-center gap-1 pl-1 w-[88px] h-6">
                <ExpertsIcon />
                Советники
              </button>
              <div className="w-0.5 h-[25px] border-l border-[#808080] bg-white" />
              <Grip />
              <ToolButton label="Бары"><AxisIcon kind="bars" /></ToolButton>
              <ToolButton label="Свечи" pressed><AxisIcon kind="candles" /></ToolButton>
              <ToolButton label="Линия"><AxisIcon kind="line" /></ToolButton>
              <Sep />
              <ToolButton label="Увеличить"><ZoomIcon plus /></ToolButton>
              <ToolButton label="Уменьшить"><ZoomIcon /></ToolButton>
              <Sep />
              <ToolButton label="Автопрокрутка" pressed><AxisIcon kind="scroll" /></ToolButton>
              <ToolButton label="Сдвиг графика" pressed><AxisIcon kind="shift" /></ToolButton>
              <Sep />
              <ToolButton label="Индикаторы" drop><IndicatorsIcon /></ToolButton>
              <ToolButton label="Периоды" drop><ClockIcon /></ToolButton>
              <ToolButton label="Шаблоны" drop><TemplateIcon /></ToolButton>
            </div>

            <div className="flex items-center h-[25px] border-r border-[#808080] shadow-[1px_0_0_#fff] text-[#505050] text-[10px]">
              <Grip />
              <ToolButton label="Курсор" pressed>
                <Icon w={10} h={16}>
                  <path d="M1 1V13L4 10L6 15L8 14L6 9.500H10Z" fill="#505050" />
                </Icon>
              </ToolButton>
              <ToolButton label="Перекрестие">
                <Icon w={16} h={16}>
                  <path d="M8.500 0V6M8.500 10V16M1 8.500H6M11 8.500H16" stroke="#505050" shapeRendering="crispEdges" />
                </Icon>
              </ToolButton>
              <Sep />
              <ToolButton label="Вертикальная линия">
                <Icon w={12} h={14}><path d="M5.500 1V13" stroke="#505050" shapeRendering="crispEdges" /></Icon>
              </ToolButton>
              <ToolButton label="Горизонтальная линия">
                <Icon w={12} h={12}><path d="M0 6.500H12" stroke="#505050" shapeRendering="crispEdges" /></Icon>
              </ToolButton>
              <ToolButton label="Трендовая линия">
                <Icon w={14} h={14}><path d="M1 13L13 1" stroke="#505050" strokeWidth="1.200" /></Icon>
              </ToolButton>
              <ToolButton label="Канал">
                <Icon w={17} h={17}>
                  <path d="M0 11L14 1M1 15L16 5M3 14L5 6M6 12L8 4M9 10L10 3M12 8L13 1" stroke="#505050" strokeWidth="1.200" />
                  <path d="M15.500 11.500H11.500V16.500H15.500M11.500 14H15" stroke="#505050" />
                </Icon>
              </ToolButton>
              <ToolButton label="Фибоначчи">
                <Icon w={17} h={17}>
                  <path d="M1 1.500H14M1 5.500H14M1 9.500H14M1 12.500H10" stroke="#505050" strokeDasharray="1 1" shapeRendering="crispEdges" />
                  <path d="M15.500 11.500H11.500V17M11.500 14H15" stroke="#505050" />
                </Icon>
              </ToolButton>
              <ToolButton label="Текст">
                <span className="font-['Liberation_Sans',sans-serif] font-bold text-xs">A</span>
              </ToolButton>
              <ToolButton label="Метка">
                <Icon w={14} h={14}>
                  <rect x="1.500" y="1.500" width="11" height="12" stroke="#505050" strokeDasharray="1 1" shapeRendering="crispEdges" />
                  <path d="M4 4.500H11M7.500 4V12" stroke="#505050" strokeWidth="1.500" />
                </Icon>
              </ToolButton>
              <ToolButton label="Стрелки" drop>
                <Icon w={16} h={14}>
                  <path d="M4 1L7.500 4.500L4 8L.5 4.500Z" fill="#505050" />
                  <path d="M11 6L14.500 9.500L11 13L7.500 9.500Z" fill="#505050" />
                  <path d="M3 8L5 11M9 3L11 5" stroke="#505050" strokeWidth="1.500" />
                </Icon>
              </ToolButton>
              <div className="w-0.5 h-[25px] border-l border-[#808080] bg-white" />
              <Grip />
              {frames.map((f) => (
                <button
                  key={f}
                  type="button"
                  onClick={() => setFrame(f)}
                  className={
                    "w-[26px] mx-px h-6 flex items-center justify-center " +
                    (f === frame
                      ? "border border-t-[#808080] border-l-[#808080] border-r-white border-b-white bg-[repeating-conic-gradient(#fff_0_25%,#d4d0c8_0_50%)] bg-[length:2px_2px]"
                      : "")
                  }
                >
                  {f}
                </button>
              ))}
            </div>
          </div>

          <button type="button" className="w-[27px] h-[25px] mr-px border border-[#808080] flex items-center justify-center">
            <span className="relative w-4 h-3 mb-1 rounded-xs bg-[#5a7ab4] text-white text-[10px] leading-3 text-center">
              4
              <svg width="4" height="4" className="absolute top-3 left-1">
                <path d="M0 0H4V4Z" fill="#5a7ab4" />
              </svg>
            </span>
          </button>
        </div>

        <Chart />

        {/* Chart tabs */}
        <div className="h-[21px] border-t border-b border-t-black border-b-white border-l border-l-[#404040] pl-[3px] flex items-start text-[#404040]">
          {chartTabs.map((t, i) => (
            <button
              key={i}
              type="button"
              onClick={() => setActiveTab(i)}
              className={
                "relative shrink-0 h-[18px] flex items-center justify-center " +
                (t.includes("JPY") ? "w-[76px] " : "w-20 ") +
                (activeTab === i
                  ? "bg-white text-black border border-t-0 border-black"
                  : i + 1 === activeTab
                  ? ""
                  : "after:absolute after:right-0 after:top-[3px] after:h-3 after:w-px after:bg-[#404040]")
              }
            >
              {t}
            </button>
          ))}
          <div className="ml-auto mr-2 mt-1.5 flex gap-3">
            <svg width="4" height="7" fill="#8c8c8c"><path d="M4 0V7L0 3.500Z" /></svg>
            <svg width="4" height="7" fill="#8c8c8c"><path d="M0 0V7L4 3.500Z" /></svg>
          </div>
        </div>

        <Terminal />
        <StatusBar />
      </div>
    </div>
  );
}
